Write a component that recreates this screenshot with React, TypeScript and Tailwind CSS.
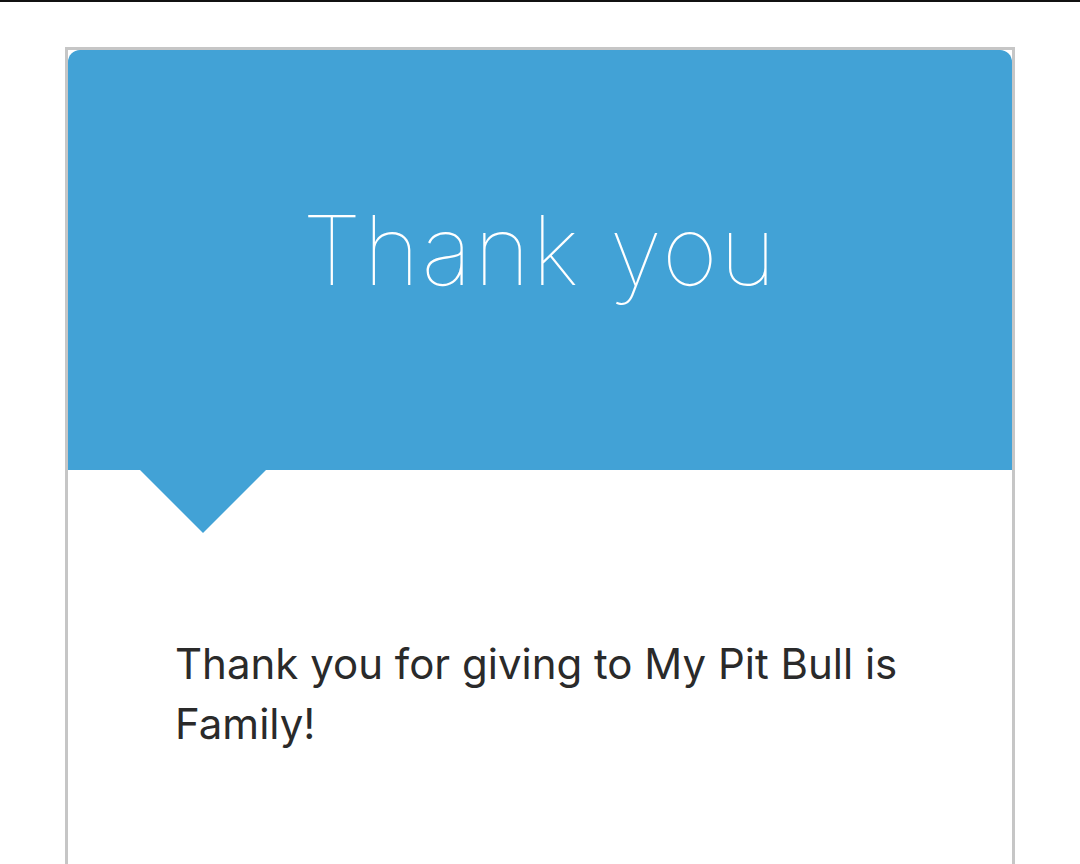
import React from "react";

const App: React.FC = () => {
  return (
    <div className="min-h-screen bg-white" style={{ fontFamily: "Inter, 'Noto Sans', sans-serif" }}>
      <div className="h-[2px] w-full bg-[#111111]" />
      <div className="pt-[45px] px-[65px]">
        <div className="border-[3px] border-b-0 border-[#c6c6c6] h-[820px]">
          <div className="relative">
            <div className="bg-[#42a2d6] rounded-t-[12px] h-[420px] flex items-center justify-center">
              <h1 className="text-white text-[96px] font-thin leading-none tracking-[2px] -mt-[20px]">
                Thank you
              </h1>
            </div>
            {/* pointer under the banner */}
            <svg
              className="absolute left-[72px] top-[420px]"
              width="126"
              height="63"
              viewBox="0 0 126 63"
            >
              <polygon points="0,0 126,0 63,63" fill="#42a2d6" />
            </svg>
          </div>
          <div className="pl-[107px] pr-[90px] pt-[164px]">
            <p className="text-[42px] leading-[60px] text-[#2a2a2a] font-normal">
              Thank you for giving to My Pit Bull is Family!
            </p>
          </div>
        </div>
      </div>
    </div>
  );
};

export default App;
